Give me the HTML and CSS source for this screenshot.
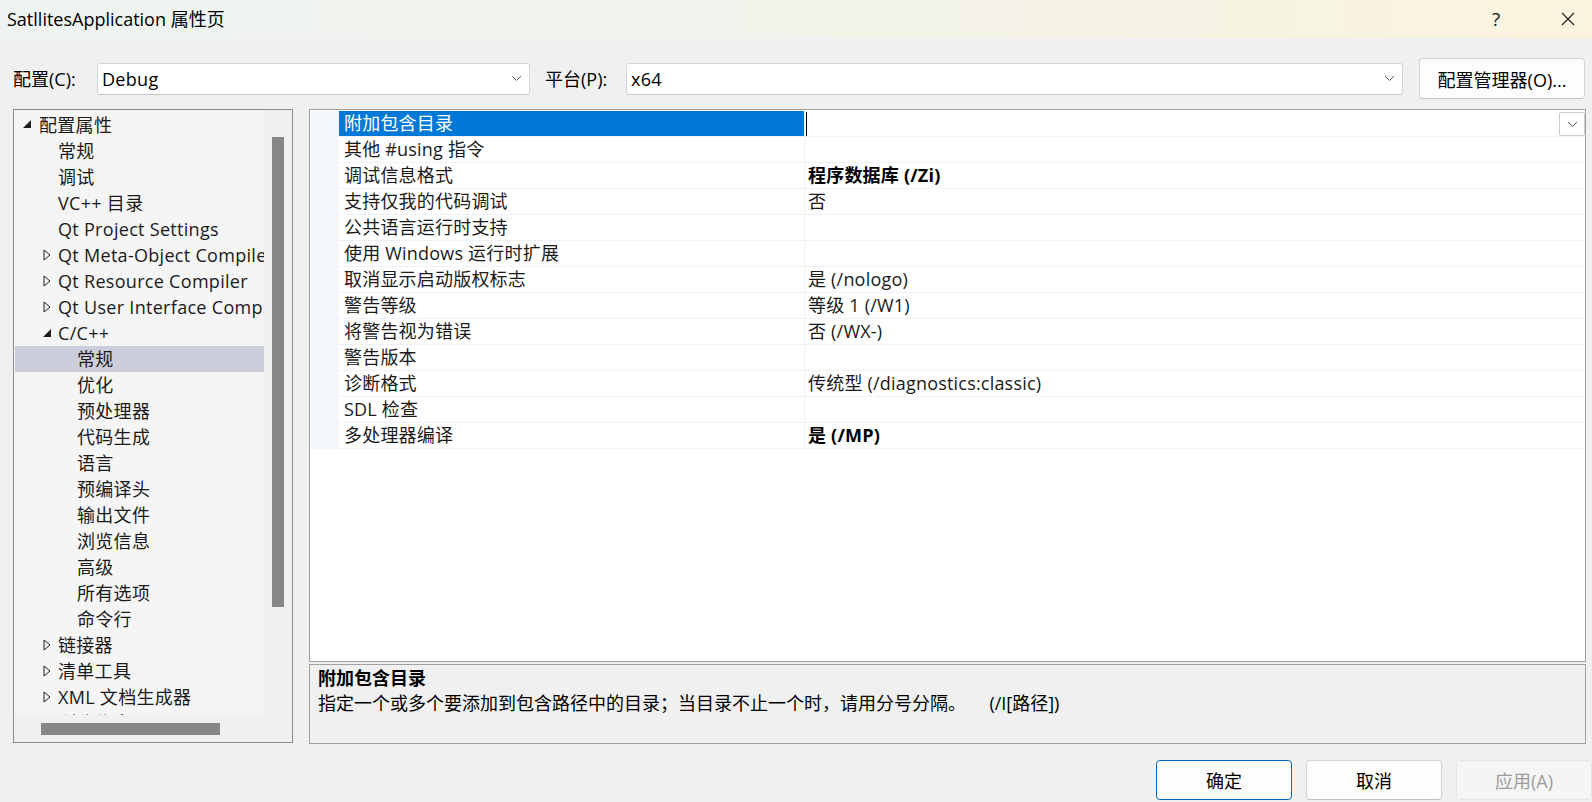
FILE: index.html
```html
<!DOCTYPE html>
<html lang="zh-CN">
<head>
<meta charset="utf-8">
<title>SatllitesApplication 属性页</title>
<link rel="stylesheet" href="styles.css">
</head>
<body>
<div class="titlebar">
  <div class="title">SatllitesApplication 属性页</div>
  <div class="tbtn help">?</div>
  <div class="tbtn close"><svg width="14" height="14" viewBox="0 0 14 14"><path d="M1 1 L13 13 M13 1 L1 13" stroke="#1a1a1a" stroke-width="1.1" fill="none"/></svg></div>
</div>

<div class="configrow">
  <div class="lbl lbl1">配置(C):</div>
  <div class="combo combo1"><span class="ctext">Debug</span><svg class="chev" width="11" height="7" viewBox="0 0 11 7"><path d="M1 1 L5.5 5.5 L10 1" stroke="#5f5f5f" stroke-width="1" fill="none"/></svg></div>
  <div class="lbl lbl2">平台(P):</div>
  <div class="combo combo2"><span class="ctext">x64</span><svg class="chev" width="11" height="7" viewBox="0 0 11 7"><path d="M1 1 L5.5 5.5 L10 1" stroke="#5f5f5f" stroke-width="1" fill="none"/></svg></div>
  <div class="btn mgr">配置管理器(O)...</div>
</div>

<div class="main">
  <div class="tree">
    <div class="tree-content">
      <div class="trow l0"><span class="tw"><svg class="exp" width="10" height="10" viewBox="0 0 10 10"><polygon points="9,1 9,9 1,9" fill="#1e1e1e"/></svg></span><span>配置属性</span></div>
      <div class="trow l1"><span class="tw"></span><span>常规</span></div>
      <div class="trow l1"><span class="tw"></span><span>调试</span></div>
      <div class="trow l1"><span class="tw"></span><span>VC++ 目录</span></div>
      <div class="trow l1"><span class="tw"></span><span>Qt Project Settings</span></div>
      <div class="trow l1"><span class="tw"><svg class="col" width="8" height="12" viewBox="0 0 8 12"><polygon points="1,1 7,6 1,11" fill="none" stroke="#1e1e1e" stroke-width="1"/></svg></span><span>Qt Meta-Object Compiler</span></div>
      <div class="trow l1"><span class="tw"><svg class="col" width="8" height="12" viewBox="0 0 8 12"><polygon points="1,1 7,6 1,11" fill="none" stroke="#1e1e1e" stroke-width="1"/></svg></span><span>Qt Resource Compiler</span></div>
      <div class="trow l1"><span class="tw"><svg class="col" width="8" height="12" viewBox="0 0 8 12"><polygon points="1,1 7,6 1,11" fill="none" stroke="#1e1e1e" stroke-width="1"/></svg></span><span>Qt User Interface Compiler</span></div>
      <div class="trow l1"><span class="tw"><svg class="exp1" width="10" height="10" viewBox="0 0 10 10"><polygon points="9,1 9,9 1,9" fill="#1e1e1e"/></svg></span><span>C/C++</span></div>
      <div class="trow l2 sel"><span class="tw"></span><span>常规</span></div>
      <div class="trow l2"><span class="tw"></span><span>优化</span></div>
      <div class="trow l2"><span class="tw"></span><span>预处理器</span></div>
      <div class="trow l2"><span class="tw"></span><span>代码生成</span></div>
      <div class="trow l2"><span class="tw"></span><span>语言</span></div>
      <div class="trow l2"><span class="tw"></span><span>预编译头</span></div>
      <div class="trow l2"><span class="tw"></span><span>输出文件</span></div>
      <div class="trow l2"><span class="tw"></span><span>浏览信息</span></div>
      <div class="trow l2"><span class="tw"></span><span>高级</span></div>
      <div class="trow l2"><span class="tw"></span><span>所有选项</span></div>
      <div class="trow l2"><span class="tw"></span><span>命令行</span></div>
      <div class="trow l1"><span class="tw"><svg class="col" width="8" height="12" viewBox="0 0 8 12"><polygon points="1,1 7,6 1,11" fill="none" stroke="#1e1e1e" stroke-width="1"/></svg></span><span>链接器</span></div>
      <div class="trow l1"><span class="tw"><svg class="col" width="8" height="12" viewBox="0 0 8 12"><polygon points="1,1 7,6 1,11" fill="none" stroke="#1e1e1e" stroke-width="1"/></svg></span><span>清单工具</span></div>
      <div class="trow l1"><span class="tw"><svg class="col" width="8" height="12" viewBox="0 0 8 12"><polygon points="1,1 7,6 1,11" fill="none" stroke="#1e1e1e" stroke-width="1"/></svg></span><span>XML 文档生成器</span></div>
      <div class="trow l1"><span class="tw"></span><span>浏览信息</span></div>
    </div>
    <div class="vscroll"><div class="vthumb"></div></div>
    <div class="hscroll"><div class="hthumb"></div></div>
    <div class="corner"></div>
  </div>

  <div class="right">
    <div class="grid">
      <div class="grow"><div class="gm"></div><div class="gname gsel">附加包含目录</div><div class="gval"><span class="caret"></span><span class="ddbtn"><svg width="11" height="7" viewBox="0 0 11 7"><path d="M1 1 L5.5 5.5 L10 1" stroke="#5f5f5f" stroke-width="1" fill="none"/></svg></span></div></div>
      <div class="grow"><div class="gm"></div><div class="gname">其他 #using 指令</div><div class="gval"></div></div>
      <div class="grow"><div class="gm"></div><div class="gname">调试信息格式</div><div class="gval b">程序数据库 (/Zi)</div></div>
      <div class="grow"><div class="gm"></div><div class="gname">支持仅我的代码调试</div><div class="gval">否</div></div>
      <div class="grow"><div class="gm"></div><div class="gname">公共语言运行时支持</div><div class="gval"></div></div>
      <div class="grow"><div class="gm"></div><div class="gname">使用 Windows 运行时扩展</div><div class="gval"></div></div>
      <div class="grow"><div class="gm"></div><div class="gname">取消显示启动版权标志</div><div class="gval">是 (/nologo)</div></div>
      <div class="grow"><div class="gm"></div><div class="gname">警告等级</div><div class="gval">等级 1 (/W1)</div></div>
      <div class="grow"><div class="gm"></div><div class="gname">将警告视为错误</div><div class="gval">否 (/WX-)</div></div>
      <div class="grow"><div class="gm"></div><div class="gname">警告版本</div><div class="gval"></div></div>
      <div class="grow"><div class="gm"></div><div class="gname">诊断格式</div><div class="gval">传统型 (/diagnostics:classic)</div></div>
      <div class="grow"><div class="gm"></div><div class="gname">SDL 检查</div><div class="gval"></div></div>
      <div class="grow"><div class="gm"></div><div class="gname">多处理器编译</div><div class="gval b">是 (/MP)</div></div>
    </div>
    <div class="desc">
      <div class="dtitle">附加包含目录</div>
      <div class="dtext">指定一个或多个要添加到包含路径中的目录；当目录不止一个时，请用分号分隔。     (/I[路径])</div>
    </div>
  </div>
</div>

<div class="buttons">
  <div class="btn dbtn ok">确定</div>
  <div class="btn dbtn">取消</div>
  <div class="btn dbtn dis">应用(A)</div>
</div>
</body>
</html>
```

FILE: styles.css
```css
html, body {
  margin: 0;
  padding: 0;
}
body {
  width: 1592px;
  height: 802px;
  overflow: hidden;
  background: #f0f0f0;
  font-family: "Open Sans", "Noto Sans CJK SC", sans-serif;
  font-size: 18px;
  color: #000;
  display: flex;
  flex-direction: column;
}

/* title bar */
.titlebar {
  height: 38px;
  flex: none;
  display: flex;
  align-items: center;
  padding-left: 7px;
  background: linear-gradient(90deg, #eef3f1 0%, #f2f3ec 45%, #fbf4de 100%);
}
.title {
  flex: 1;
  line-height: 36px;
  color: #000;
}
.tbtn {
  width: 48px;
  height: 38px;
  display: flex;
  align-items: center;
  justify-content: center;
  color: #1a1a1a;
}
.help {
  margin-right: 24px;
  font-size: 19px;
}

/* configuration row */
.configrow {
  flex: none;
  height: 41px;
  margin-top: 20px;
  padding-left: 13px;
  padding-right: 7px;
  display: flex;
  align-items: center;
}
.lbl {
  flex: none;
  line-height: 32px;
}
.lbl1 { width: 84px; }
.lbl2 { width: 81px; margin-left: 15px; }
.combo {
  box-sizing: border-box;
  height: 32px;
  background: #fff;
  border: 1px solid #d6d6d6;
  border-bottom-color: #c4c4c4;
  border-radius: 3px;
  display: flex;
  align-items: center;
  padding-left: 4px;
  padding-right: 7px;
}
.combo1 { width: 433px; flex: none; }
.combo2 { flex: 1; }
.ctext {
  flex: 1;
  line-height: 30px;
  letter-spacing: 0.3px;
}
.chev { flex: none; }
.btn {
  box-sizing: border-box;
  background: #fdfdfd;
  border: 1px solid #d4d4d4;
  border-bottom-color: #c2c2c2;
  border-radius: 4px;
  display: flex;
  align-items: center;
  justify-content: center;
}
.mgr {
  flex: none;
  width: 166px;
  height: 41px;
  margin-left: 16px;
}

/* main area */
.main {
  flex: none;
  height: 635px;
  margin-top: 10px;
  padding-left: 13px;
  padding-right: 6px;
  display: flex;
  gap: 16px;
}

/* tree */
.tree {
  flex: none;
  width: 280px;
  height: 634px;
  box-sizing: border-box;
  border: 1px solid #878b92;
  display: grid;
  grid-template-columns: 250px 28px;
  grid-template-rows: 605px 27px;
}
.tree-content {
  background: #f5f5f5;
  overflow: hidden;
  padding-top: 2px;
  padding-left: 1px;
  color: #1a1a1a;
}
.trow {
  height: 26px;
  display: flex;
  align-items: center;
  white-space: nowrap;
  line-height: 26px;
  letter-spacing: 0.3px;
}
.trow.l0 { padding-left: 5px; }
.trow.l1 { padding-left: 24px; }
.trow.l2 { padding-left: 43px; }
.trow.sel { background: #cccedb; }
.tw {
  flex: none;
  width: 19px;
  height: 26px;
  display: flex;
  align-items: center;
}
.tw .exp { margin-left: 2px; margin-top: -2px; }
.tw .exp1 { margin-left: 3px; margin-top: -1px; }
.tw .col { margin-left: 4px; }
.vscroll {
  background: #f0f0f0;
  padding-top: 27px;
  padding-left: 8px;
}
.vthumb {
  width: 12px;
  height: 470px;
  background: #868686;
}
.hscroll {
  background: #f0f0f0;
  padding-top: 8px;
  padding-left: 27px;
}
.hthumb {
  width: 179px;
  height: 12px;
  background: #868686;
}
.corner { background: #f0f0f0; }

/* property grid */
.right {
  flex: 1;
  display: flex;
  flex-direction: column;
  gap: 2px;
}
.grid {
  flex: none;
  height: 553px;
  box-sizing: border-box;
  border: 1px solid #a0a0a0;
  background: #fff;
  padding-top: 1px;
}
.grow {
  display: flex;
  height: 26px;
}
.gm {
  flex: none;
  width: 29px;
  background: #f4f7fc;
}
.gname {
  flex: none;
  width: 466px;
  box-sizing: border-box;
  padding-left: 5px;
  line-height: 25px;
  white-space: nowrap;
  border-bottom: 1px solid #eef1f7;
  border-right: 1px solid #eef1f7;
  color: #1a1a1a;
  letter-spacing: 0.2px;
}
.gname.gsel {
  background: #0078d7;
  color: #fff;
}
.gval {
  flex: 1;
  box-sizing: border-box;
  padding-left: 3px;
  line-height: 25px;
  white-space: nowrap;
  border-bottom: 1px solid #eef1f7;
  display: flex;
  align-items: flex-start;
  color: #1a1a1a;
  letter-spacing: 0.2px;
}
.gval.b {
  font-weight: 700;
  color: #000;
}
.caret {
  width: 1px;
  height: 24px;
  margin-left: -2px;
  margin-top: 1px;
  background: #000;
}
.ddbtn {
  margin-left: auto;
  margin-top: 1px;
  width: 26px;
  height: 24px;
  box-sizing: border-box;
  border: 1px solid #cdcdcd;
  border-radius: 2px;
  background: #fff;
  display: flex;
  align-items: center;
  justify-content: center;
}

/* description */
.desc {
  flex: none;
  height: 80px;
  box-sizing: border-box;
  border: 1px solid #a0a0a0;
  background: #f0f0f0;
  padding-left: 8px;
}
.dtitle {
  font-weight: 700;
  line-height: 26px;
}
.dtext {
  line-height: 25px;
  white-space: pre;
}

/* bottom buttons */
.buttons {
  flex: none;
  height: 40px;
  margin-top: 16px;
  display: flex;
  justify-content: flex-end;
  gap: 14px;
}
.dbtn {
  width: 136px;
  height: 40px;
  color: #000;
}
.dbtn.ok {
  border: 1px solid #0067c0;
}
.dbtn.dis {
  background: #f5f5f5;
  border-color: #e5e5e5;
  color: #9d9d9d;
}
```
